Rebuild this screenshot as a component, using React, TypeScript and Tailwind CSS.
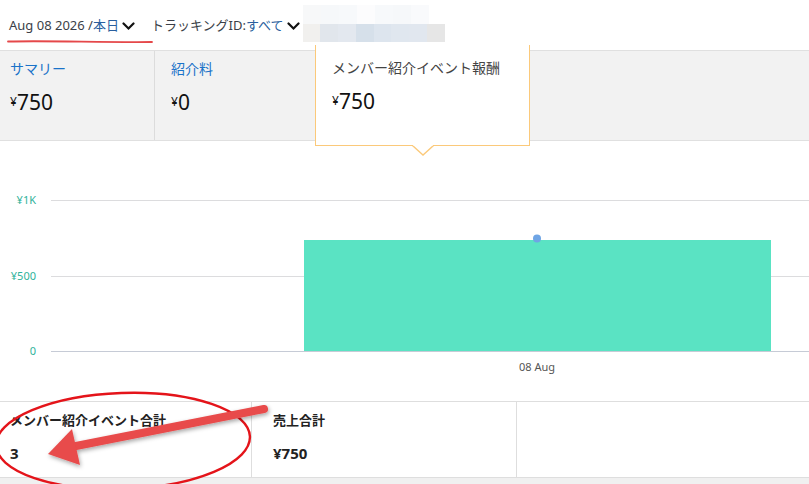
import React from "react";

const FONT = { fontFamily: '"Noto Sans", "Noto Sans CJK JP", sans-serif' };

function Chevron() {
  return (
    <svg width="13" height="9" viewBox="0 0 13 9" className="ml-[3px] mt-[2px]">
      <path d="M1.5 1.5 L6.5 6.5 L11.5 1.5" fill="none" stroke="#111" strokeWidth="2.2" strokeLinecap="round" />
    </svg>
  );
}

// pixelated privacy mask next to the tracking filter
const maskTop = ["#f7f8f9", "#f6f8fa", "#f7f9fb", "#fcfcfd", "#f7f9fb", "#f6f8fa", "#f9fafc"];
const maskBottom = ["#f1f0ee", "#e1e6ec", "#e3e8ef", "#d6e0ea", "#dde5ee", "#e0e7ef", "#e1e7ef", "#e6e6e6"];

function Mask() {
  return (
    <div className="relative ml-[3px] mt-[5px] h-[37px] w-[142px] self-start">
      <div className="flex h-[19px]">
        {maskTop.map((c, i) => (
          <div key={i} className="h-full w-[18px]" style={{ background: c }} />
        ))}
      </div>
      <div className="flex h-[18px]">
        {maskBottom.map((c, i) => (
          <div key={i} className="h-full w-[18px]" style={{ background: c }} />
        ))}
      </div>
    </div>
  );
}

function Yen({ value }: { value: string }) {
  return (
    <div className="flex items-start text-[#111]">
      <span className="mt-[4px] text-[12px] leading-none">¥</span>
      <span className="text-[21px] leading-none">{value}</span>
    </div>
  );
}

export default function App() {
  return (
    <div className="relative h-[484px] w-[809px] overflow-hidden bg-white" style={FONT}>
      {/* filter bar */}
      <div className="flex h-[50px] items-start">
        <div className="mt-[19px] ml-[9px] flex items-center text-[13px] leading-none">
          <span className="text-[#3b3f48]">Aug 08 2026 /</span>
          <span className="text-[#2a5f9e]">本日</span>
          <Chevron />
        </div>
        <div className="mt-[19px] ml-[16px] flex items-center text-[13px] leading-none">
          <span className="text-[#3b3f48]">トラッキングID:</span>
          <span className="text-[#2a5f9e]">すべて</span>
          <Chevron />
        </div>
        <Mask />
      </div>

      {/* summary tiles */}
      <div className="flex h-[91px] border-t border-b border-[#e0e0e0] bg-[#f2f2f2]">
        <div className="flex w-[155px] flex-col border-r border-[#dcdcdc] pl-[10px] pt-[11px]">
          <span className="text-[14px] leading-none text-[#1a73c9]">サマリー</span>
          <div className="mt-[16px]">
            <Yen value="750" />
          </div>
        </div>
        <div className="flex w-[160px] flex-col pl-[16px] pt-[11px]">
          <span className="text-[14px] leading-none text-[#1a73c9]">紹介料</span>
          <div className="mt-[16px]">
            <Yen value="0" />
          </div>
        </div>
        <div className="relative z-10 -mt-[6px] flex h-[101px] w-[215px] flex-col border-x border-b border-[#fbc97a] bg-white pl-[16px] pt-[16px]">
          <span className="text-[14px] leading-none text-[#444]">メンバー紹介イベント報酬</span>
          <div className="mt-[16px]">
            <Yen value="750" />
          </div>
          <svg className="absolute -bottom-[11px] left-[96px]" width="22" height="11" viewBox="0 0 22 11">
            <path d="M0 0 L11 10 L22 0" fill="white" stroke="#fbc97a" strokeWidth="1.3" />
            <rect x="1" y="-1" width="20" height="1.5" fill="white" />
          </svg>
        </div>
        <div className="flex-1" />
      </div>

      {/* chart */}
      <svg width="809" height="260" className="block">
        <g fontSize="11" fill="#2fb39b" textAnchor="end" style={FONT}>
          <text x="36" y="63">¥1K</text>
          <text x="36" y="139">¥500</text>
          <text x="36" y="214">0</text>
        </g>
        <line x1="51" y1="59.5" x2="809" y2="59.5" stroke="#dcdcde" />
        <line x1="51" y1="135.5" x2="809" y2="135.5" stroke="#dcdcde" />
        <line x1="51" y1="210.5" x2="809" y2="210.5" stroke="#c6cbd6" />
        <rect x="304" y="99" width="467" height="111" fill="#5ae3c3" />
        <circle cx="537" cy="97.5" r="4" fill="#6fa5e5" />
        <text x="537" y="230" fontSize="11" fill="#555" textAnchor="middle" style={FONT}>
          08 Aug
        </text>
      </svg>

      {/* totals row */}
      <div className="flex h-[77px] border-t border-b border-[#dedede]">
        <div className="flex w-[252px] flex-col border-r border-[#dedede] pl-[10px] pt-[12px]">
          <span className="text-[13px] font-semibold leading-none text-[#222]">メンバー紹介イベント合計</span>
          <span className="mt-[19px] text-[15px] font-bold leading-none text-[#222]">3</span>
        </div>
        <div className="flex w-[265px] flex-col border-r border-[#dedede] pl-[21px] pt-[12px]">
          <span className="text-[13px] font-semibold leading-none text-[#222]">売上合計</span>
          <span className="mt-[19px] text-[15px] font-bold leading-none text-[#222]">¥750</span>
        </div>
        <div className="flex-1" />
      </div>
      <div className="h-[7px] bg-[#f0f0f0]" />

      {/* hand-drawn annotations */}
      <svg className="pointer-events-none absolute left-0 top-0" width="809" height="484">
        <defs>
          <filter id="arrowShadow" x="-20%" y="-50%" width="140%" height="200%">
            <feDropShadow dx="1" dy="2" stdDeviation="2" floodColor="#000" floodOpacity="0.35" />
          </filter>
        </defs>
        <path d="M8 41.5 C 50 40.5, 100 42.5, 152 42" fill="none" stroke="#e5484a" strokeWidth="1.8" strokeLinecap="round" />
        <ellipse cx="123" cy="441" rx="127" ry="48" fill="none" stroke="#e4141a" strokeWidth="2.4" transform="rotate(-2 123 441)" />
        <g filter="url(#arrowShadow)" fill="#e84b4b">
          <path d="M264 409 L76 446" stroke="#e84b4b" strokeWidth="8" strokeLinecap="round" />
          <path d="M48 454 L72 429 L80 465 Z" />
        </g>
      </svg>
    </div>
  );
}
